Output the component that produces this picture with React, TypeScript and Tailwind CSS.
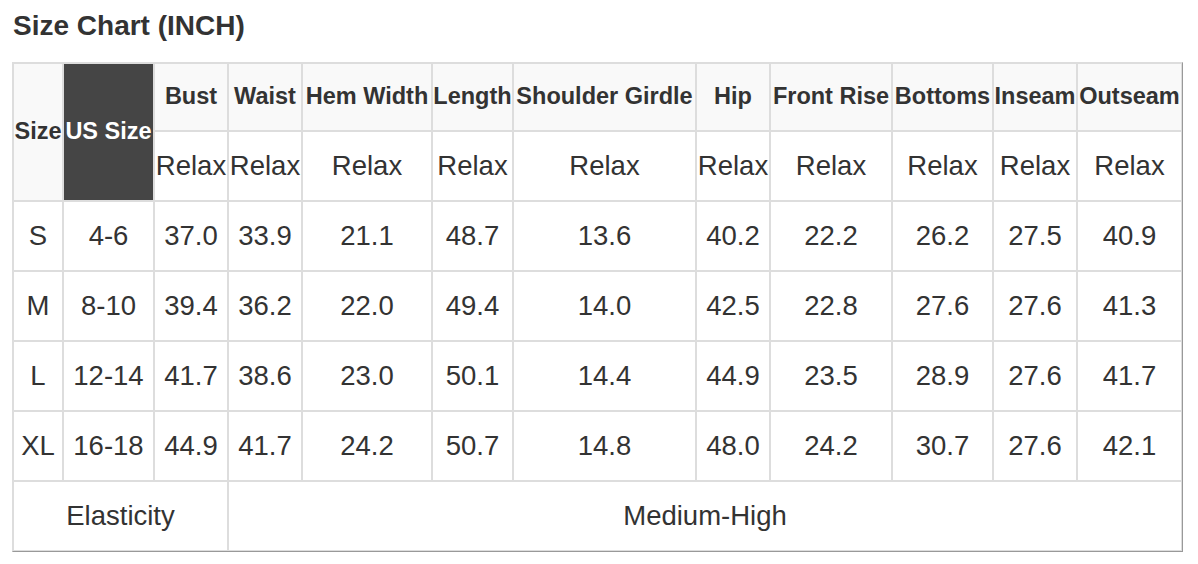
import React from "react";

const cols = ["50px", "91px", "74px", "74px", "130px", "81px", "183px", "74px", "122px", "101px", "84px", "105px"];

const headers = ["Bust", "Waist", "Hem Width", "Length", "Shoulder Girdle", "Hip", "Front Rise", "Bottoms", "Inseam", "Outseam"];

const rows: string[][] = [
  ["S", "4-6", "37.0", "33.9", "21.1", "48.7", "13.6", "40.2", "22.2", "26.2", "27.5", "40.9"],
  ["M", "8-10", "39.4", "36.2", "22.0", "49.4", "14.0", "42.5", "22.8", "27.6", "27.6", "41.3"],
  ["L", "12-14", "41.7", "38.6", "23.0", "50.1", "14.4", "44.9", "23.5", "28.9", "27.6", "41.7"],
  ["XL", "16-18", "44.9", "41.7", "24.2", "50.7", "14.8", "48.0", "24.2", "30.7", "27.6", "42.1"],
];

const cell = "border border-[#dddddd] flex items-center justify-center whitespace-nowrap overflow-visible";
const head = "font-bold text-[23.5px] leading-none";
const body = "text-[27.5px] leading-none";

export default function App() {
  return (
    <div
      className="min-h-[564px] bg-white pl-[12px] text-[#333333]"
      style={{ fontFamily: '"Liberation Sans", Arial, Helvetica, sans-serif' }}
    >
      <div className="pt-[10px] text-[28px] font-bold leading-[32px] pl-[1px]">Size Chart (INCH)</div>
      <div className="mt-[20px] inline-block border border-t-[#dddddd] border-l-[#dddddd] border-r-[#999999] border-b-[#999999]">
        <div
          className="grid"
          style={{ gridTemplateColumns: cols.join(" "), gridTemplateRows: "68px 70px 70px 70px 70px 70px 70px" }}
        >
          <div className={`${cell} ${head} row-span-2 bg-[#f9f9f9]`}>Size</div>
          <div className={`${cell} ${head} row-span-2 bg-[#454545] text-white`}>US Size</div>
          {headers.map((h) => (
            <div key={h} className={`${cell} ${head} bg-[#f9f9f9]`}>
              {h}
            </div>
          ))}
          {headers.map((h) => (
            <div key={h + "-r"} className={`${cell} ${body} bg-white`}>
              Relax
            </div>
          ))}
          {rows.map((r) =>
            r.map((v, i) => (
              <div key={r[0] + i} className={`${cell} ${body} bg-white`}>
                {v}
              </div>
            ))
          )}
          <div className={`${cell} ${body} col-span-3 bg-white`}>Elasticity</div>
          <div className={`${cell} ${body} col-span-9 bg-white`}>Medium-High</div>
        </div>
      </div>
    </div>
  );
}
